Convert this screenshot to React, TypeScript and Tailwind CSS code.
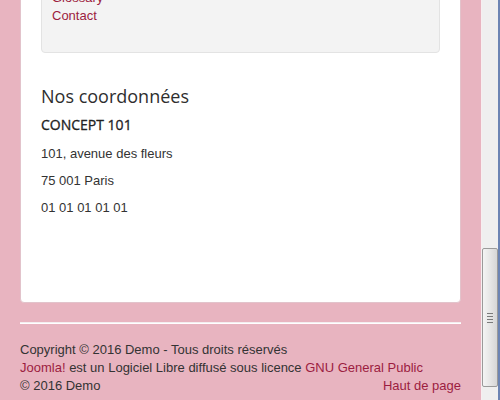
import React from 'react';

const link = 'text-[#9c1d40]';

function Scrollbar() {
  return (
    <div className="w-[19px] h-full flex shrink-0">
      <div className="w-px bg-[#f7eef0]" />
      <div className="w-[16px] bg-[#efefef] relative">
        {/* thumb */}
        <div className="absolute left-0 top-[248px] w-[16px] h-[139px] rounded-[2px] border border-[#9a9a9a] bg-gradient-to-r from-[#f4f4f4] via-[#e6e6e6] to-[#d6d6d6] flex items-center justify-center">
          <div className="flex flex-col gap-[2px] w-[6px]">
            <div className="h-px bg-[#7a7a7a]" />
            <div className="h-px bg-[#7a7a7a]" />
            <div className="h-px bg-[#7a7a7a]" />
            <div className="h-px bg-[#7a7a7a]" />
          </div>
        </div>
      </div>
      <div className="w-[2px] bg-[#6c84b3]" />
    </div>
  );
}

export default function App() {
  return (
    <div
      className="w-[500px] h-[400px] overflow-hidden flex bg-[#e8b4c0] text-[#333] text-[13px] leading-[18px]"
      style={{ fontFamily: '"Liberation Sans", Arial, sans-serif' }}
    >
      <div className="w-[481px] shrink-0 px-[20px]">
        {/* contenu */}
        <div className="-mt-[52px] pt-[20px] pb-[85px] px-[20px] bg-white rounded-[4px] border border-[#e2c3cb]">
          <div className="bg-[#f3f3f3] border border-[#e3e3e3] rounded-[4px] pt-[19px] pb-[27px] px-[10px]">
            <ul className="flex flex-col">
              <li className={link}>Glossary</li>
              <li className={link}>Contact</li>
            </ul>
          </div>

          <h3
            className="mt-[33px] text-[18px] leading-[20px] text-[#2e2e2e]"
            style={{ fontFamily: '"Open Sans", sans-serif' }}
          >
            Nos coordonnées
          </h3>
          <p
            className="mt-[9px] text-[14px] leading-[20px] font-medium text-[#222]"
            style={{ fontFamily: '"Open Sans", sans-serif', WebkitTextStroke: '0.3px #222' }}
          >
            CONCEPT 101
          </p>
          <p className="mt-[10px]">101, avenue des fleurs</p>
          <p className="mt-[9px]">75 001 Paris</p>
          <p className="mt-[9px]">01 01 01 01 01</p>
        </div>

        {/* footer */}
        <div className="mt-[19px] border-t border-b border-t-[#f4eef0] border-b-white" />
        <footer className="mt-[17px]">
          <p>Copyright © 2016 Demo - Tous droits réservés</p>
          <p>
            <span className={link}>Joomla!</span> est un Logiciel Libre diffusé sous licence{' '}
            <span className={link}>GNU General Public</span>
          </p>
          <div className="flex justify-between">
            <span>© 2016 Demo</span>
            <span className={link}>Haut de page</span>
          </div>
        </footer>
      </div>
      <Scrollbar />
    </div>
  );
}
